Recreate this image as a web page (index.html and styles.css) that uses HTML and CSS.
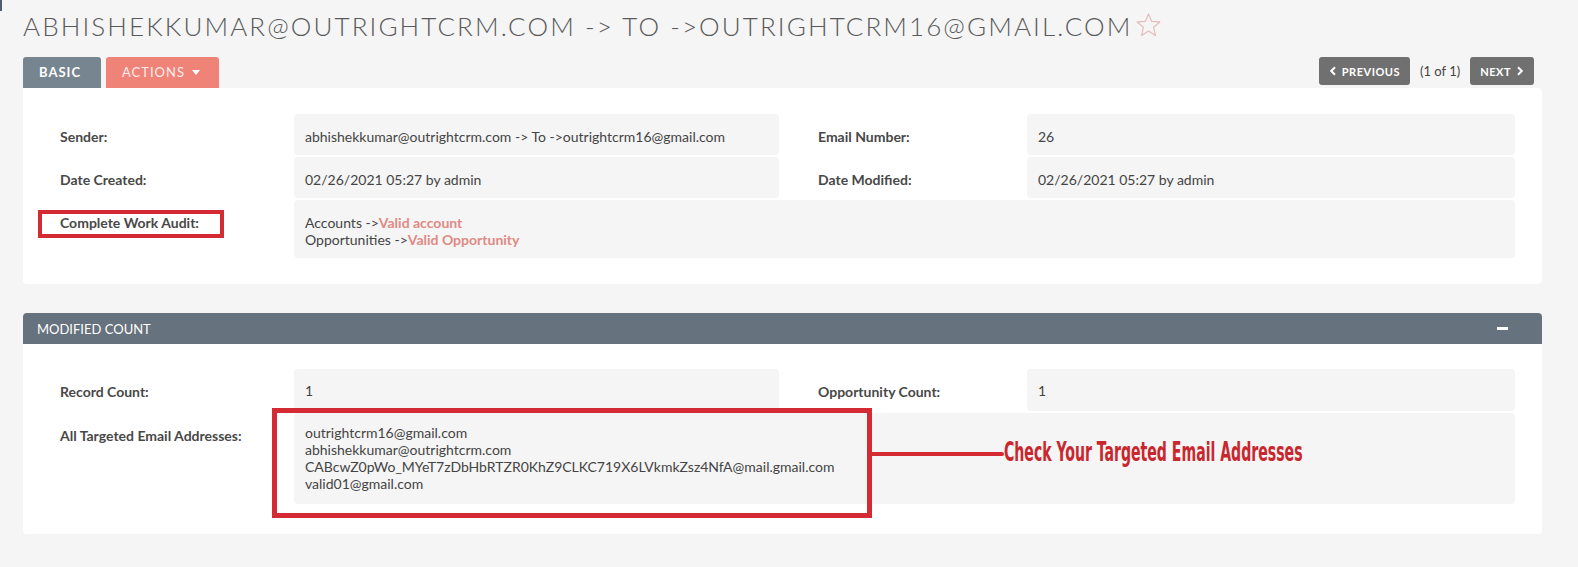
FILE: index.html
```html
<!DOCTYPE html>
<html lang="en">
<head>
    <meta charset="UTF-8">
    <title>Email detail</title>
    <link rel="stylesheet" href="styles.css">
</head>
<body>
<div class="edge"></div>
<div class="page">
    <h2 class="title">ABHISHEKKUMAR@OUTRIGHTCRM.COM -&gt; TO -&gt;OUTRIGHTCRM16@GMAIL.COM<svg class="star" width="27" height="26" viewBox="0 0 24 24"><polygon points="12,1.8 14.9,8.6 22.4,9.2 16.7,14.1 18.4,21.6 12,17.6 5.6,21.6 7.3,14.1 1.6,9.2 9.1,8.6" fill="none" stroke="#e4bcbc" stroke-width="1.1" stroke-linejoin="round"/></svg></h2>

    <div class="toolbar">
        <div class="tabs">
            <span class="tab basic">BASIC</span>
            <span class="tab actions">ACTIONS<i class="caret"></i></span>
        </div>
        <div class="pager">
            <span class="pbtn"><svg width="8" height="10" viewBox="0 0 8 10"><path d="M6 1.2 L2.2 5 L6 8.8" fill="none" stroke="#fff" stroke-width="2"/></svg>PREVIOUS</span>
            <span class="count">(1 of 1)</span>
            <span class="pbtn">NEXT<svg width="8" height="10" viewBox="0 0 8 10"><path d="M2 1.2 L5.8 5 L2 8.8" fill="none" stroke="#fff" stroke-width="2"/></svg></span>
        </div>
    </div>

    <div class="panel detail">
        <div class="grid">
            <div class="label">Sender:</div>
            <div class="value">abhishekkumar@outrightcrm.com -&gt; To -&gt;outrightcrm16@gmail.com</div>
            <div class="label right">Email Number:</div>
            <div class="value">26</div>

            <div class="label">Date Created:</div>
            <div class="value">02/26/2021 05:27 by admin</div>
            <div class="label right">Date Modified:</div>
            <div class="value">02/26/2021 05:27 by admin</div>

            <div class="label"><span class="mark">Complete Work Audit:</span></div>
            <div class="value wide">Accounts -&gt;<a href="#">Valid account</a><br>Opportunities -&gt;<a href="#">Valid Opportunity</a></div>
        </div>
    </div>

    <div class="section">
        <div class="section-head">MODIFIED COUNT<span class="minus"></span></div>
        <div class="panel body">
            <div class="grid">
                <div class="label">Record Count:</div>
                <div class="value">1</div>
                <div class="label right">Opportunity Count:</div>
                <div class="value">1</div>

                <div class="label">All Targeted Email Addresses:</div>
                <div class="value wide">outrightcrm16@gmail.com<br>abhishekkumar@outrightcrm.com<br>CABcwZ0pWo_MYeT7zDbHbRTZR0KhZ9CLKC719X6LVkmkZsz4NfA@mail.gmail.com<br>valid01@gmail.com</div>
            </div>
            <!--标注-->
            <div class="note-box"></div>
            <div class="note-line"></div>
            <div class="note-text">Check Your Targeted Email Addresses</div>
        </div>
    </div>
</div>
</body>
</html>
```

FILE: styles.css
```css
* {
    margin: 0;
    padding: 0
}

body {
    background-color: #f5f5f5;
    font-family: Lato, "Open Sans", sans-serif;
    color: #444;
}

a {
    text-decoration: none
}

.edge {
    position: absolute;
    left: 0;
    top: 0;
    width: 2px;
    height: 11px;
    background-color: #4f5d6c;
}

.page {
    padding: 11px 36px 0 23px;
}

.title {
    font-weight: 300;
    font-size: 26px;
    line-height: 31px;
    letter-spacing: 2.1px;
    color: #5a5a5a;
    display: flex;
    align-items: center;
}

.star {
    margin-left: 3px;
    margin-top: -3px;
}

.toolbar {
    margin-top: 15px;
    display: flex;
    justify-content: space-between;
    align-items: flex-start;
}

.tabs {
    display: flex;
    gap: 5px;
}

.tab {
    height: 31px;
    line-height: 31px;
    padding: 0 16px;
    border-radius: 3px 3px 0 0;
    color: #fff;
    font-size: 13px;
    letter-spacing: 1px;
}

.tab.basic {
    background-color: #778591;
    font-weight: bold;
    width: 46px;
}

.tab.actions {
    background-color: #f08377;
    width: 81px;
    color: #fdeeee;
}

.caret {
    display: inline-block;
    width: 0;
    height: 0;
    border-left: 4px solid transparent;
    border-right: 4px solid transparent;
    border-top: 5px solid #fff;
    margin-left: 7px;
    vertical-align: 2px;
}

.pager {
    display: flex;
    align-items: center;
    margin-right: 8px;
}

.pbtn {
    height: 28px;
    display: flex;
    align-items: center;
    gap: 5px;
    padding: 0 10px;
    background-color: #707070;
    border-radius: 3px;
    color: #fff;
    font-size: 11px;
    font-weight: bold;
    letter-spacing: 0.5px;
}

.count {
    font-size: 13px;
    color: #444;
    margin: 0 10px;
}

.panel {
    background-color: #fff;
}

.detail {
    padding: 26px 27px 26px 37px;
    border-radius: 0 4px 4px 4px;
}

.grid {
    display: grid;
    grid-template-columns: 234px 485px 248px 1fr;
    row-gap: 2px;
}

.label {
    padding-top: 14px;
    line-height: 17px;
    font-size: 14px;
    font-weight: bold;
    color: #484848;
}

.label.right {
    padding-left: 39px;
}

.value {
    background-color: #f5f5f5;
    border-radius: 4px;
    padding: 14px 12px 10px 11px;
    line-height: 17px;
    font-size: 14px;
    color: #444;
}

.value.wide {
    grid-column: 2 / 5;
}

.value a {
    color: #e08a84;
    font-weight: bold;
}

.mark {
    display: inline-block;
    border: 4px solid #d42a33;
    padding: 0 21px 3px 18px;
    margin: -9px 0 0 -22px;
}

.section {
    margin-top: 29px;
}

.section-head {
    height: 31px;
    background-color: #66727d;
    border-radius: 4px 4px 0 0;
    color: #fff;
    font-size: 13px;
    padding: 0 34px 0 14px;
    display: flex;
    justify-content: space-between;
    align-items: center;
}

.minus {
    width: 11px;
    height: 3px;
    background-color: #fff;
}

.body {
    position: relative;
    padding: 25px 27px 30px 37px;
    border-radius: 0 0 4px 4px;
}

.body .value {
    padding-top: 13px;
    padding-bottom: 12px;
}

.body .value.wide {
    padding-top: 11px;
}

.note-box {
    position: absolute;
    left: 249px;
    top: 64px;
    width: 590px;
    height: 100px;
    border: 5px solid #d42a33;
}

.note-line {
    position: absolute;
    left: 849px;
    top: 108px;
    width: 132px;
    height: 4px;
    background-color: #d42a33;
    border-radius: 0 3px 3px 0;
}

.note-text {
    position: absolute;
    left: 981px;
    top: 93px;
    font-family: "Liberation Sans Narrow", "DejaVu Sans Condensed", sans-serif;
    font-weight: bold;
    font-size: 27px;
    line-height: 30px;
    color: #c9262e;
    white-space: nowrap;
    transform: scaleX(0.58);
    transform-origin: left center;
}
```
